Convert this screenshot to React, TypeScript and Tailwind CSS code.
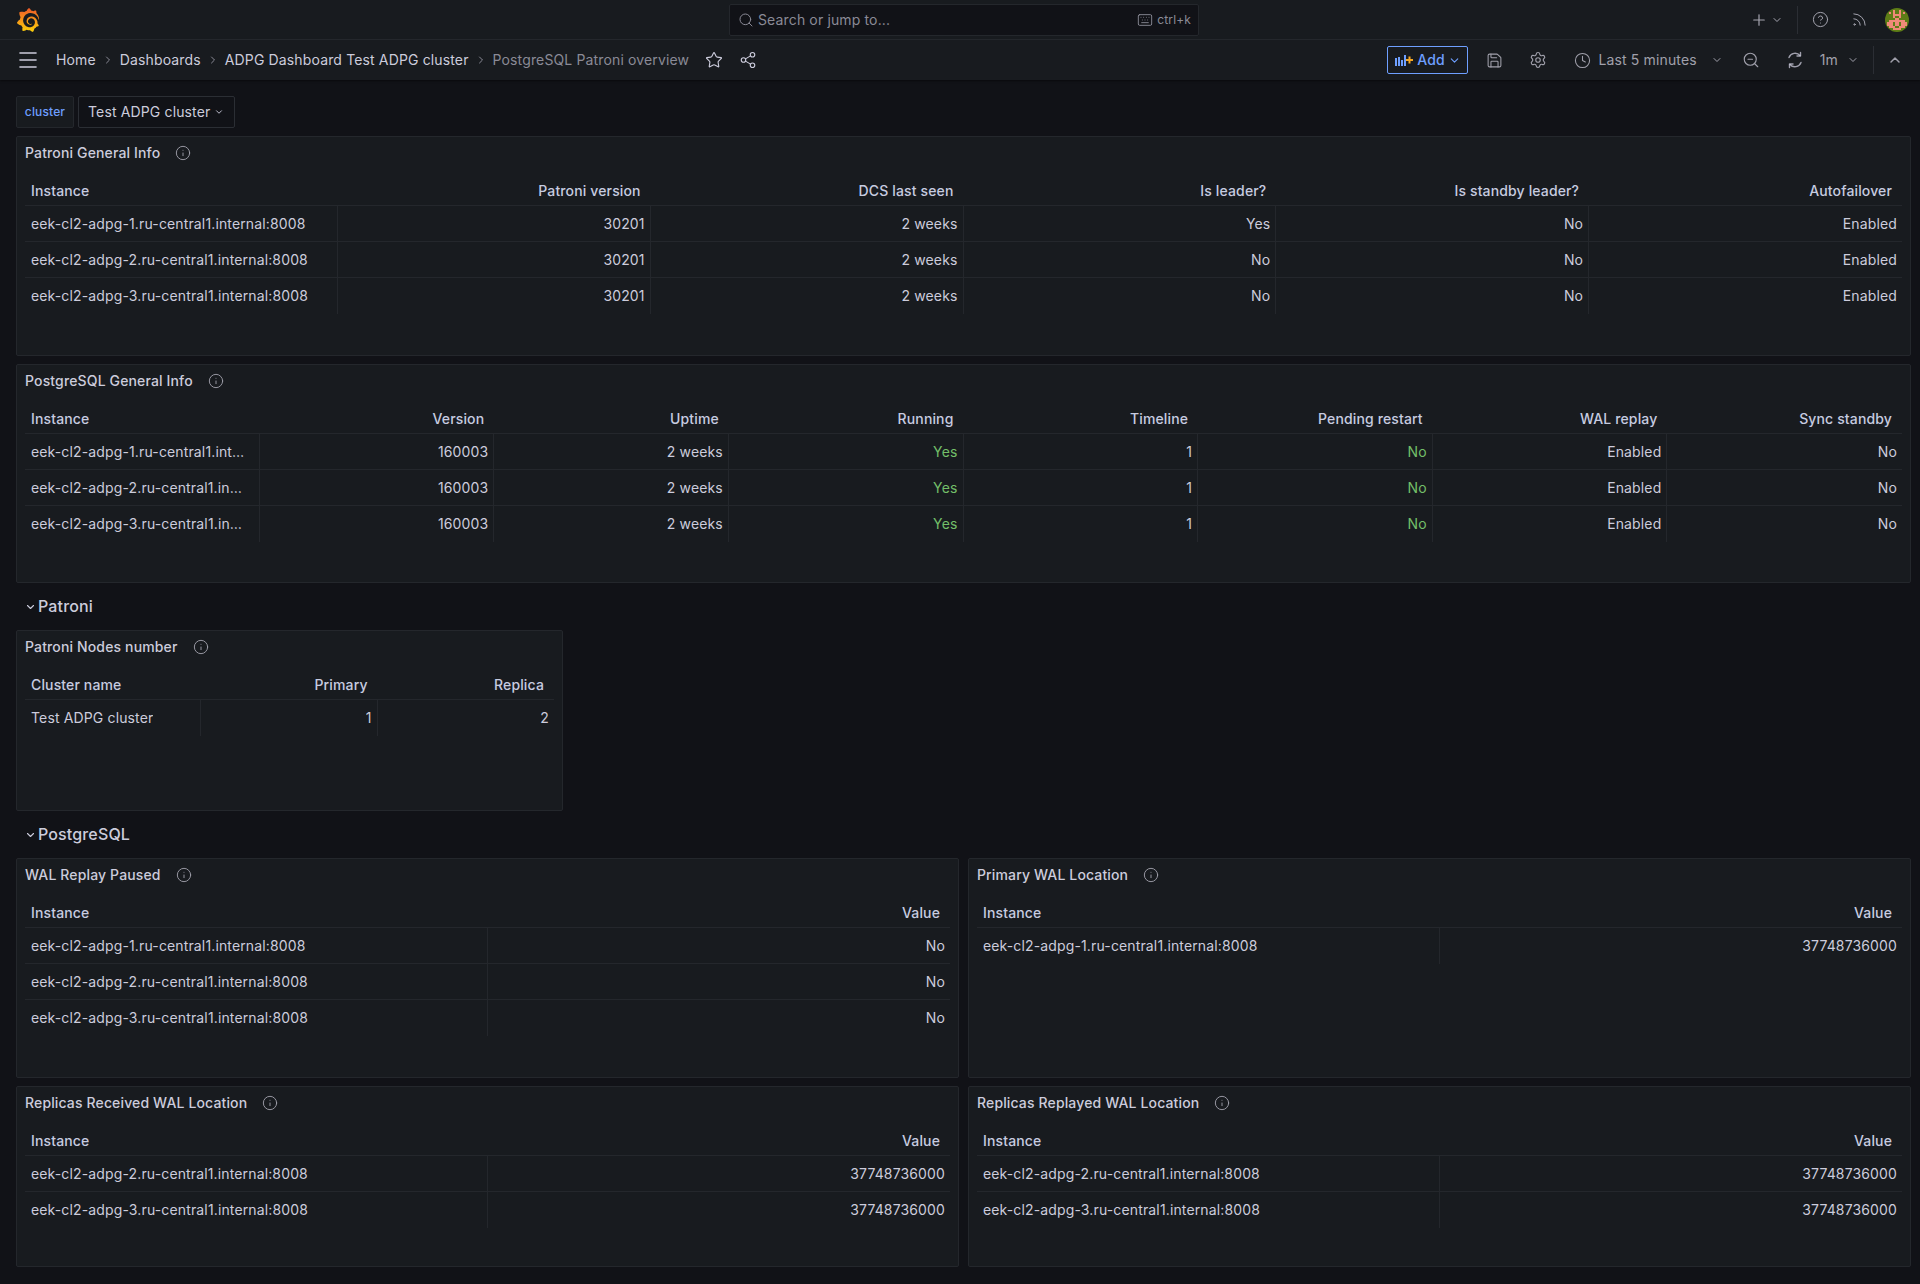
import React from "react";
import {
  Search,
  Star,
  Share2,
  Save,
  Settings,
  Clock,
  ZoomOut,
  ChevronDown,
  ChevronUp,
  ChevronRight,
  Menu,
  Plus,
  CircleHelp,
  Rss,
  Info,
  Keyboard,
} from "lucide-react";
import { SiGrafana } from "react-icons/si";

const AVATAR = [
  "............",
  "....P..P....",
  "..P.P..P.P..",
  "....PPPP....",
  "....P..P....",
  ".....PP.....",
  "..PPPPPPPP..",
  ".PPP.PP.PPP.",
  ".PPP.PP.PPP.",
  "..PPP..PPP..",
  "....PPPP....",
  "............",
];

function Avatar() {
  return (
    <svg width="24" height="24" viewBox="0 0 24 24" className="rounded-full bg-[#5e7d16]">
      {AVATAR.flatMap((row, y) =>
        row.split("").map((c, x) =>
          c === "P" ? <rect key={`${x}-${y}`} x={x * 2} y={y * 2} width="2" height="2" fill="#f08a78" /> : null
        )
      )}
    </svg>
  );
}

function SyncIcon() {
  return (
    <svg width="18" height="18" viewBox="0 0 18 18" fill="none" stroke="#ccccdc" strokeOpacity="0.75" strokeWidth="1.4" strokeLinecap="round" strokeLinejoin="round">
      <path d="M3 6.5A6.5 6.5 0 0 1 14 4.5" />
      <path d="M15 11.5A6.5 6.5 0 0 1 4 13.5" />
      <path d="M14.5 1.5V5H11" />
      <path d="M3.5 16.5V13H7" />
    </svg>
  );
}

function AddIcon() {
  return (
    <svg width="19" height="12" viewBox="0 0 19 12">
      <rect x="0" y="4" width="2" height="8" fill="#6e9fff" />
      <rect x="3" y="3" width="2" height="9" fill="#6e9fff" />
      <rect x="6" y="6" width="2" height="6" fill="#6e9fff" />
      <rect x="9" y="1" width="2" height="11" fill="#6e9fff" />
      <path d="M14.5 2.5v7M11 6h7" stroke="#f5a623" strokeWidth="2" />
    </svg>
  );
}

type Row = string[];

function DataTable({ cols, gridClass, rows, leftCols = 1, green = [] }: { cols: string[]; gridClass: string; rows: Row[]; leftCols?: number; green?: number[] }) {
  return (
    <div className="px-2 text-sm">
      <div className={`grid ${gridClass} h-[38px] border-b border-[#24272c] pt-[8px]`}>
        {cols.map((c, i) => (
          <div key={c} className={`flex items-center px-[6px] pr-[10px] font-medium text-[#c7cce0] ${i < leftCols ? "justify-start" : "justify-end"}`}>
            {c}
          </div>
        ))}
      </div>
      {rows.map((row, r) => (
        <div key={r} className={`grid ${gridClass} h-9 ${r < rows.length - 1 ? "border-b border-[#24272c]" : ""}`}>
          {row.map((cell, i) => (
            <div
              key={i}
              className={`flex min-w-0 items-center pl-[6px] ${i < leftCols ? "justify-start pr-[14px]" : "justify-end pr-[5px]"} ${i < cols.length - 1 ? "border-r border-[#24272c]" : ""} ${green.includes(i) ? "text-[#73bf69]" : "text-[#ccccdc]"}`}
            >
              <span className="truncate">{cell}</span>
            </div>
          ))}
        </div>
      ))}
    </div>
  );
}

function Panel({ title, heightClass, children }: { title: string; heightClass: string; children: React.ReactNode }) {
  return (
    <section className={`${heightClass} overflow-hidden rounded-[2px] border border-[#24272c] bg-[#181b1f]`}>
      <header className="flex h-[31px] items-center gap-[15px] pl-2 text-sm font-medium text-[#ccccdc]">
        {title}
        <Info size={16} strokeWidth={1.4} className="text-[#a0a0ab]" />
      </header>
      {children}
    </section>
  );
}

function RowTitle({ title }: { title: string }) {
  return (
    <div className="flex h-[31px] items-center pb-[2px] pl-[8px] text-base font-medium text-[#ccccdc]">
      <ChevronDown size={12} strokeWidth={2.2} className="mr-px mt-[3px] w-[13px]" />
      {title}
    </div>
  );
}

const inst = (n: number) => `eek-cl2-adpg-${n}.ru-central1.internal:8008`;

export default function App() {
  return (
    <div className="min-h-[1284px] bg-[#111217] font-['Inter',sans-serif] text-sm tracking-[0.14px] text-[#ccccdc]">
      <svg width="0" height="0" className="absolute">
        <defs>
          <linearGradient id="grafana-g" x1="0" y1="1" x2="0" y2="0">
            <stop offset="0" stopColor="#fcd10a" />
            <stop offset="1" stopColor="#f05a28" />
          </linearGradient>
        </defs>
      </svg>

      {/* top bars */}
      <div className="h-20 bg-[#181b1f] shadow-[0_1px_2px_rgba(0,0,0,0.5)]">
        <div className="flex h-10 items-center border-b border-[#24272c]">
          <SiGrafana size={24} className="ml-4 fill-[url(#grafana-g)]" />
          <div className="ml-[689px] flex h-8 w-[470px] items-center rounded-[2px] border border-[#24272c] bg-[#111217] pl-[8px] pr-[7px] text-[#8a8a96]">
            <Search size={16} strokeWidth={1.5} />
            <span className="ml-[4px]">Search or jump to...</span>
            <Keyboard size={16} strokeWidth={1.4} className="ml-auto" />
            <span className="ml-[4px] text-xs">ctrl+k</span>
          </div>
          <div className="ml-auto flex items-center pr-[11px] text-[#a5a5b0]">
            <Plus size={18} strokeWidth={1.6} />
            <ChevronDown size={12} strokeWidth={2} className="ml-[3px]" />
            <div className="mx-[14px] h-[28px] w-px bg-[#2b2e34]" />
            <CircleHelp size={17} strokeWidth={1.4} />
            <Rss size={17} strokeWidth={1.4} className="ml-[22px]" />
            <div className="ml-[17px]">
              <Avatar />
            </div>
          </div>
        </div>
        <div className="flex h-10 items-center">
          <Menu size={24} strokeWidth={1.6} className="ml-[16px] text-[#ccccdc]" />
          <span className="ml-[16px]">Home</span>
          <span className="flex w-[24px] justify-center text-[#8a8a96]"><ChevronRight size={12} /></span>
          <span>Dashboards</span>
          <span className="flex w-[24px] justify-center text-[#8a8a96]"><ChevronRight size={12} /></span>
          <span>ADPG Dashboard Test ADPG cluster</span>
          <span className="flex w-[24px] justify-center text-[#8a8a96]"><ChevronRight size={12} /></span>
          <span className="text-[#8a8a96]">PostgreSQL Patroni overview</span>
          <Star size={18} strokeWidth={1.5} className="ml-[16px]" />
          <Share2 size={18} strokeWidth={1.5} className="ml-[16px]" />
          <div className="ml-auto flex items-center pr-[17px] text-[#a0a0ab]">
            <button className="flex h-7 w-[81px] items-center justify-center gap-[3px] rounded-[2px] border border-[#6e9fff] font-medium text-[#6e9fff]">
              <AddIcon />
              Add
              <ChevronDown size={13} strokeWidth={2} />
            </button>
            <div className="ml-1 flex w-11 justify-center"><Save size={17} strokeWidth={1.5} /></div>
            <div className="flex w-11 justify-center"><Settings size={18} strokeWidth={1.5} /></div>
            <Clock size={17} strokeWidth={1.5} className="ml-[14px]" />
            <span className="ml-[7px]">Last 5 minutes</span>
            <ChevronDown size={12} strokeWidth={2} className="ml-[14px]" />
            <div className="ml-[6px] flex w-11 justify-center"><ZoomOut size={18} strokeWidth={1.5} /></div>
            <div className="flex w-11 justify-center"><SyncIcon /></div>
            <span className="ml-[3px]">1m</span>
            <ChevronDown size={12} strokeWidth={2} className="ml-[9px]" />
            <div className="ml-[14px] h-[28px] w-px bg-[#2b2e34]" />
            <ChevronUp size={16} strokeWidth={2.2} className="ml-[13px]" />
          </div>
        </div>
      </div>

      {/* variables and panels */}
      <div className="pl-4 pr-[9px] pt-4">
        <div className="mb-2 flex h-8 items-center">
          <div className="flex h-8 w-[58px] items-center justify-center rounded-[2px] border border-[#24272c] bg-[#181b1f] text-xs font-medium text-[#6e9fff]">
            cluster
          </div>
          <div className="ml-[4px] flex h-8 w-[157px] items-center rounded-[2px] border border-[#2b2e34] bg-[#111217] pl-[9px]">
            Test ADPG cluster
            <ChevronDown size={10} strokeWidth={2.2} className="ml-[4px]" />
          </div>
        </div>

        <div className="flex flex-col gap-2">
          <Panel title="Patroni General Info" heightClass="h-[220px]">
            <DataTable
              gridClass="grid-cols-6"
              cols={["Instance", "Patroni version", "DCS last seen", "Is leader?", "Is standby leader?", "Autofailover"]}
              rows={[
                [inst(1), "30201", "2 weeks", "Yes", "No", "Enabled"],
                [inst(2), "30201", "2 weeks", "No", "No", "Enabled"],
                [inst(3), "30201", "2 weeks", "No", "No", "Enabled"],
              ]}
            />
          </Panel>

          <Panel title="PostgreSQL General Info" heightClass="h-[219px]">
            <DataTable
              gridClass="grid-cols-8"
              green={[3, 5]}
              cols={["Instance", "Version", "Uptime", "Running", "Timeline", "Pending restart", "WAL replay", "Sync standby"]}
              rows={[
                [inst(1), "160003", "2 weeks", "Yes", "1", "No", "Enabled", "No"],
                [inst(2), "160003", "2 weeks", "Yes", "1", "No", "Enabled", "No"],
                [inst(3), "160003", "2 weeks", "Yes", "1", "No", "Enabled", "No"],
              ]}
            />
          </Panel>

          <RowTitle title="Patroni" />

          <div className="w-[547px]">
            <Panel title="Patroni Nodes number" heightClass="h-[181px]">
              <DataTable
                gridClass="grid-cols-3"
                cols={["Cluster name", "Primary", "Replica"]}
                rows={[["Test ADPG cluster", "1", "2"]]}
              />
            </Panel>
          </div>

          <RowTitle title="PostgreSQL" />

          <div className="grid grid-cols-2 gap-x-[9px] gap-y-2">
            <Panel title="WAL Replay Paused" heightClass="h-[220px]">
              <DataTable
                gridClass="grid-cols-2"
                cols={["Instance", "Value"]}
                rows={[
                  [inst(1), "No"],
                  [inst(2), "No"],
                  [inst(3), "No"],
                ]}
              />
            </Panel>
            <Panel title="Primary WAL Location" heightClass="h-[220px]">
              <DataTable gridClass="grid-cols-2" cols={["Instance", "Value"]} rows={[[inst(1), "37748736000"]]} />
            </Panel>
            <Panel title="Replicas Received WAL Location" heightClass="h-[181px]">
              <DataTable
                gridClass="grid-cols-2"
                cols={["Instance", "Value"]}
                rows={[
                  [inst(2), "37748736000"],
                  [inst(3), "37748736000"],
                ]}
              />
            </Panel>
            <Panel title="Replicas Replayed WAL Location" heightClass="h-[181px]">
              <DataTable
                gridClass="grid-cols-2"
                cols={["Instance", "Value"]}
                rows={[
                  [inst(2), "37748736000"],
                  [inst(3), "37748736000"],
                ]}
              />
            </Panel>
          </div>
        </div>
      </div>
    </div>
  );
}
